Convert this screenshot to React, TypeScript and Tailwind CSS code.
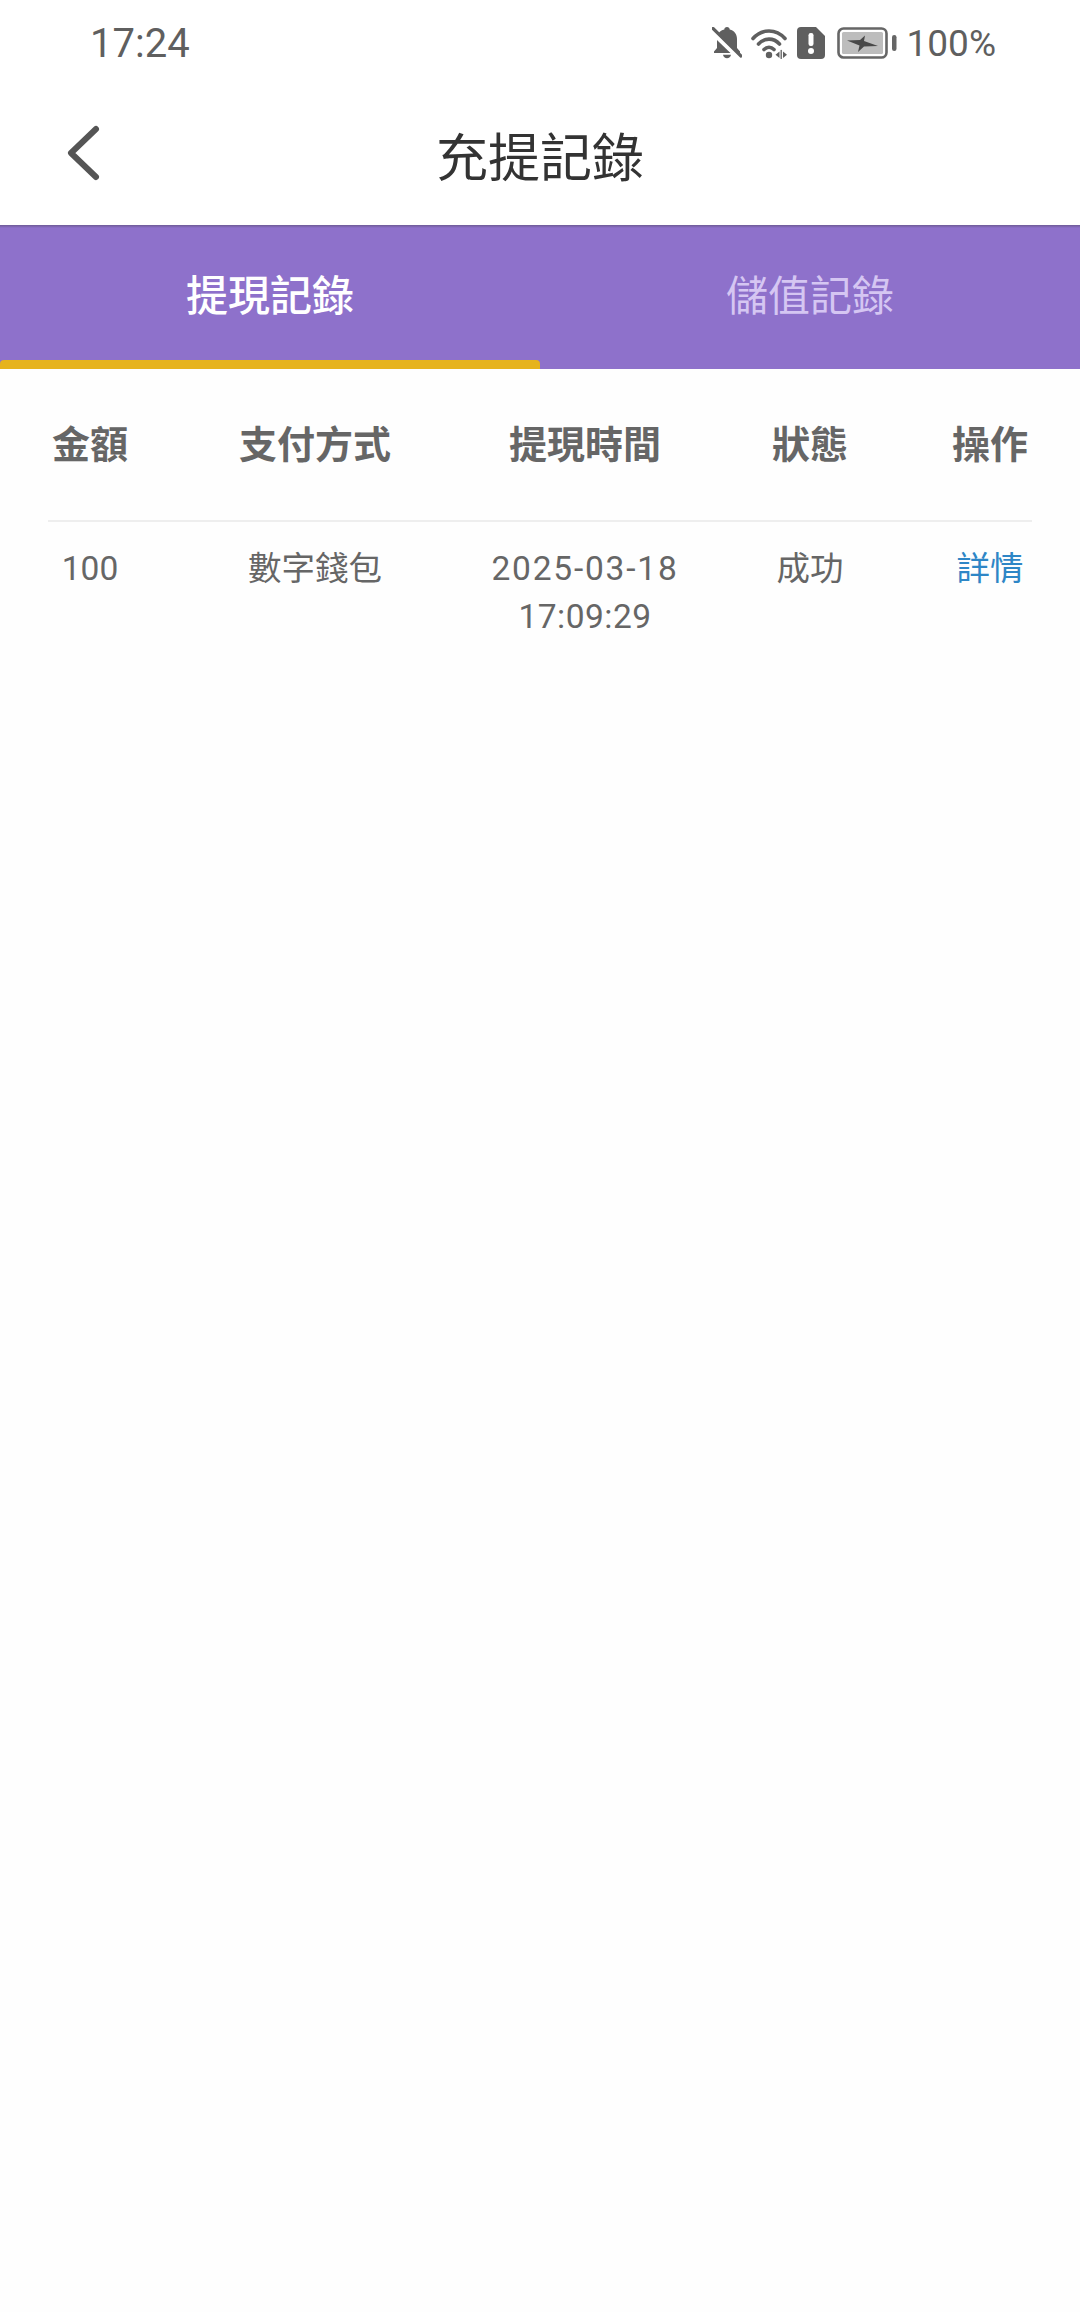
const cjk = "font-['Noto_Sans_CJK_TC','Noto_Sans_CJK_SC',sans-serif]";
const latin = "font-['Roboto','Noto_Sans_CJK_TC',sans-serif]";

function BellOff() {
  return (
    <svg width="30" height="32" viewBox="0 0 30 32" fill="#5f5f5f">
      <path d="M15 0c1.600 0 2.700 1.100 2.700 2.500 4.800 1.100 7.300 5 7.300 9.500v9l3 3.500V26H2v-1.500L5 21v-9c0-4.500 2.500-8.400 7.300-9.500C12.300 1.100 13.400 0 15 0z" />
      <path d="M11 27.800h8c-.4 2-2 3.400-4 3.400s-3.600-1.400-4-3.400z" />
      <path d="M-1 3 28 31" stroke="#fff" strokeWidth="6" />
      <path d="M1 1.500 29 29" stroke="#5f5f5f" strokeWidth="3.200" strokeLinecap="round" />
    </svg>
  );
}

function WifiIcon() {
  return (
    <svg width="38" height="32" viewBox="0 0 38 32" fill="none" stroke="#5f5f5f" strokeWidth="3.600" strokeLinecap="round">
      <path d="M2 11.500C11 1.500 25 1.500 34 11.500" />
      <path d="M7.500 17c6-6.500 15-6.500 21 0" />
      <path d="M13 22.500c3-3 7-3 10 0" />
      <circle cx="18" cy="28" r="3.200" fill="#5f5f5f" stroke="none" />
      <path d="M28.500 24.500v6.500l-4-3.200z" fill="#5f5f5f" stroke="none" />
      <path d="M32 24.500v6.500l4-3.200z" fill="#5f5f5f" stroke="none" />
      <path d="M30.200 23.500v8" strokeWidth="1.300" />
    </svg>
  );
}

function SimAlert() {
  return (
    <svg width="28" height="32" viewBox="0 0 28 32">
      <path d="M4 0h15l9 9v19a4 4 0 0 1-4 4H4a4 4 0 0 1-4-4V4a4 4 0 0 1 4-4z" fill="#5f5f5f" />
      <rect x="11.500" y="6" width="5" height="13" rx="2.200" fill="#fff" />
      <circle cx="14" cy="24" r="3" fill="#fff" />
    </svg>
  );
}

function BatteryCharging() {
  return (
    <svg width="60" height="32" viewBox="0 0 60 32">
      <rect x="1.500" y="1.500" width="48" height="29" rx="5" fill="none" stroke="#666" strokeWidth="2.600" />
      <rect x="5" y="5" width="41" height="22" rx="1.500" fill="#bdbdbd" />
      <rect x="55" y="8" width="4.500" height="16" rx="2.200" fill="#666" />
      <path d="M10 13.500 23 13 28 8.500 27 14 41 19 27 19.500 21 25 22.500 18.500z" fill="#484848" />
    </svg>
  );
}

function StatusBar() {
  return (
    <div className={`flex h-[84px] items-center justify-between pl-[90px] pr-[84px] pt-[2px] text-[#5f5f5f] ${latin}`}>
      <span className="pt-[2px] text-[40px] leading-none">17:24</span>
      <div className="flex items-center pl-[2px]">
        <BellOff />
        <div className="ml-[9px]"><WifiIcon /></div>
        <div className="ml-[8px]"><SimAlert /></div>
        <div className="ml-[12px]"><BatteryCharging /></div>
        <span className="ml-[10px] text-[37px] leading-none">100%</span>
      </div>
    </div>
  );
}

function TitleBar() {
  return (
    <div className="relative flex h-[141px] items-center justify-center">
      <svg className="absolute left-[64px] top-[40px]" width="40" height="58" viewBox="0 0 40 58" fill="none" stroke="#555" strokeWidth="6" strokeLinecap="round" strokeLinejoin="round">
        <path d="M32 5 7 29l25 24" />
      </svg>
      <h1 className={`text-[52px] font-normal leading-none text-[#333] ${cjk}`}>充提記錄</h1>
    </div>
  );
}

function Tabs() {
  return (
    <div className={`flex h-[144px] bg-[linear-gradient(#6e5a96_0,#8e71cb_3px)] ${cjk}`}>
      <div className="flex flex-1 flex-col">
        <div className="flex flex-1 items-center justify-center text-[42px] font-medium leading-none text-white">提現記錄</div>
        <div className="h-[9px] rounded-t-[4px] bg-[#e6b31e]" />
      </div>
      <div className="flex flex-1 items-center justify-center pb-[8px] text-[42px] leading-none text-[#d5c6f2]">儲值記錄</div>
    </div>
  );
}

const rowGrid = "grid grid-cols-[84px_306px_294px_156px_144px]";

function RecordTable() {
  return (
    <div className="mx-[48px]">
      <div className={`${rowGrid} h-[153px] items-center border-b-2 border-[#eeeeee] pb-[5px] text-center text-[38px] font-bold leading-none text-[#666] ${cjk}`}>
        <div>金額</div>
        <div className="pl-[60px]">支付方式</div>
        <div>提現時間</div>
        <div>狀態</div>
        <div className="pl-[60px]">操作</div>
      </div>
      <div className={`${rowGrid} pt-[23px] text-center text-[33.500px] leading-[48px] text-[#666] ${latin}`}>
        <div>100</div>
        <div className="pl-[60px]">數字錢包</div>
        <div>
          <div className="tracking-[1.800px]">2025-03-18</div>
          <div className="tracking-[0.500px]">17:09:29</div>
        </div>
        <div>成功</div>
        <div className="pl-[60px] text-[#2e86c6]">詳情</div>
      </div>
    </div>
  );
}

export default function App() {
  return (
    <div className="h-[2312px] w-[1080px] overflow-hidden bg-[#fefefe]">
      <div className="bg-white">
        <StatusBar />
        <TitleBar />
      </div>
      <Tabs />
      <RecordTable />
    </div>
  );
}
